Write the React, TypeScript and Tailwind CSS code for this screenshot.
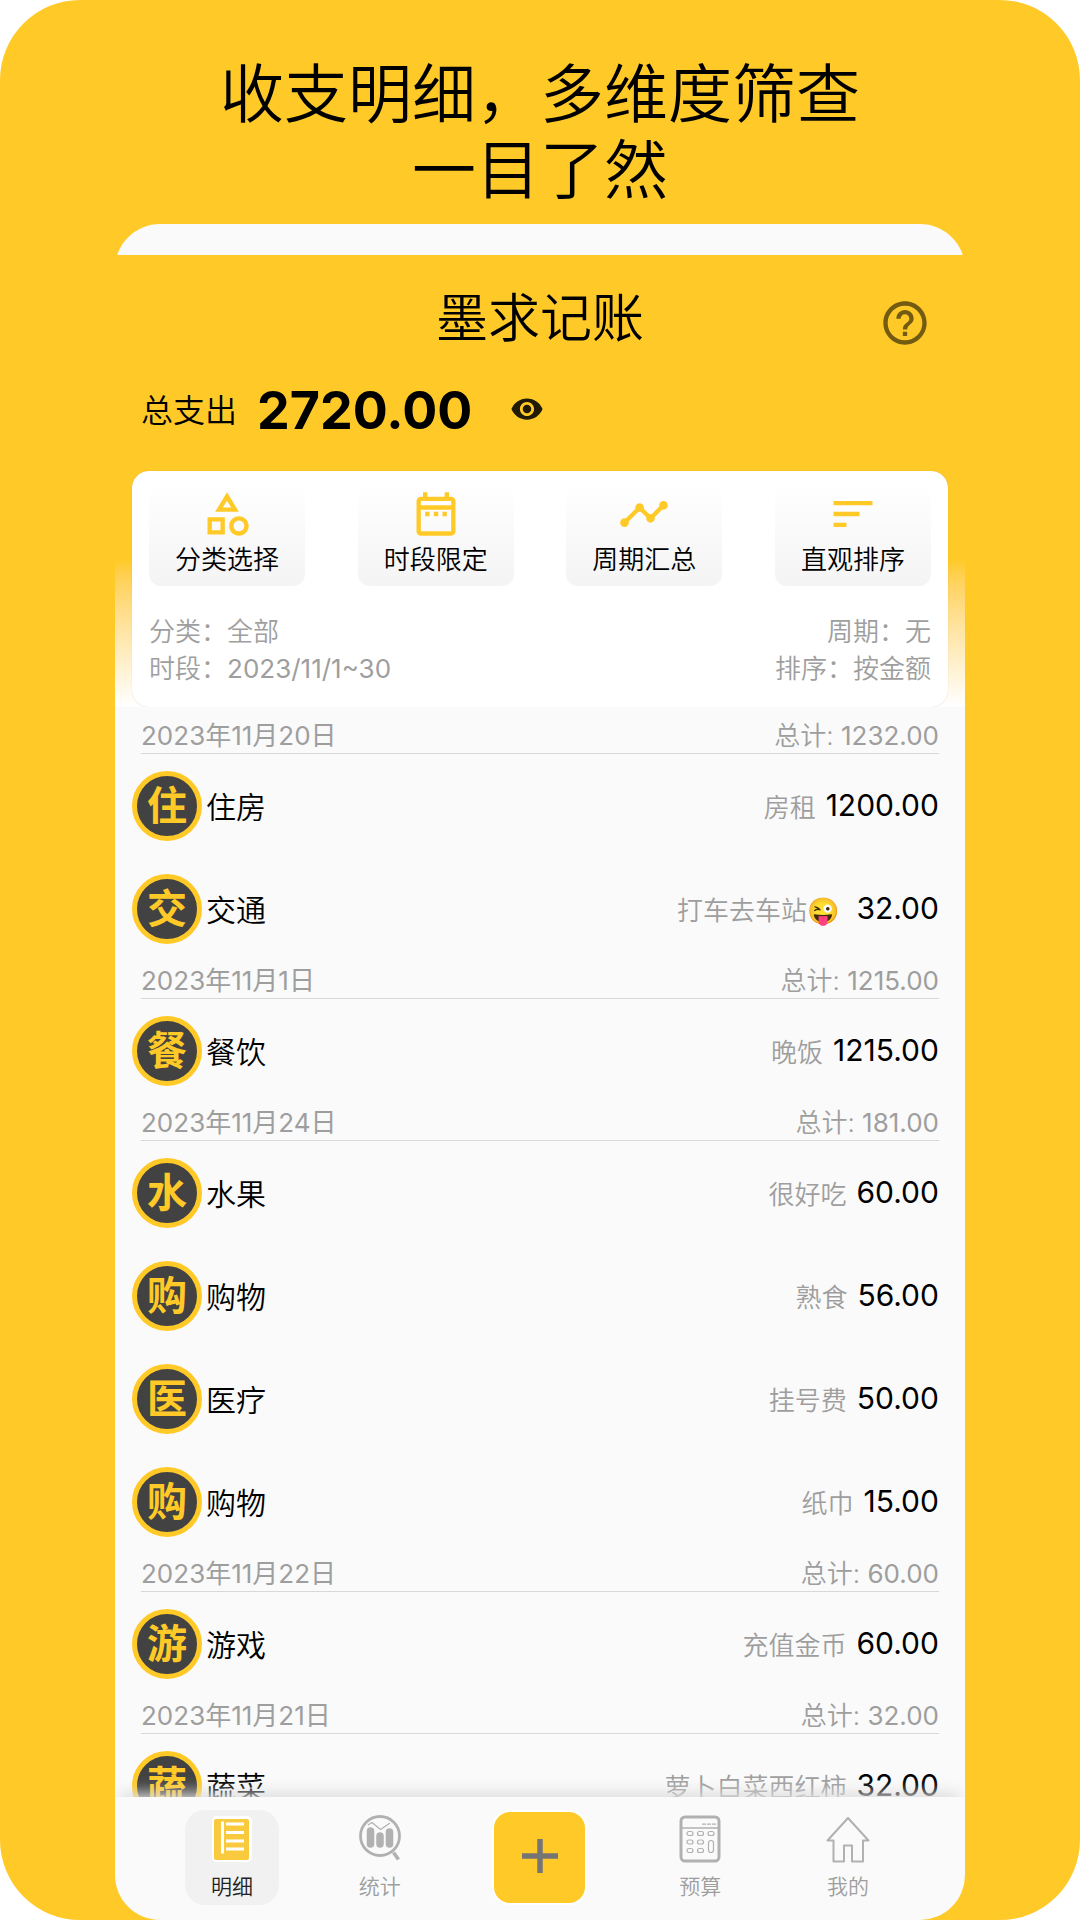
import {
  MdHelpOutline,
  MdOutlineCategory,
  MdOutlineDateRange,
  MdSort,
  MdTimeline,
  MdVisibility,
} from "react-icons/md";

const filters = [
  { label: "分类选择", Icon: MdOutlineCategory },
  { label: "时段限定", Icon: MdOutlineDateRange },
  { label: "周期汇总", Icon: MdTimeline },
  { label: "直观排序", Icon: MdSort },
];

const groups = [
  {
    date: "2023年11月20日",
    total: "1232.00",
    items: [
      { mark: "住", name: "住房", note: "房租", amount: "1200.00" },
      { mark: "交", name: "交通", note: "打车去车站😜 ", amount: "32.00" },
    ],
  },
  {
    date: "2023年11月1日",
    total: "1215.00",
    items: [{ mark: "餐", name: "餐饮", note: "晚饭", amount: "1215.00" }],
  },
  {
    date: "2023年11月24日",
    total: "181.00",
    items: [
      { mark: "水", name: "水果", note: "很好吃", amount: "60.00" },
      { mark: "购", name: "购物", note: "熟食", amount: "56.00" },
      { mark: "医", name: "医疗", note: "挂号费", amount: "50.00" },
      { mark: "购", name: "购物", note: "纸巾", amount: "15.00" },
    ],
  },
  {
    date: "2023年11月22日",
    total: "60.00",
    items: [{ mark: "游", name: "游戏", note: "充值金币", amount: "60.00" }],
  },
  {
    date: "2023年11月21日",
    total: "32.00",
    items: [{ mark: "蔬", name: "蔬菜", note: "萝卜白菜西红柿", amount: "32.00" }],
  },
];

type Item = (typeof groups)[number]["items"][number];

function ListIcon() {
  return (
    <svg viewBox="0 0 42 48" className="w-[42px] h-12" aria-hidden="true">
      <rect x="1" y="1" width="40" height="46" rx="5" fill="#fff" />
      <rect x="3" y="4" width="35" height="41" rx="2" fill="#f9ca3e" />
      <path d="M11.500 6.500v32M15 9h18M15 17.500h18M15 26h18M15 34h18" stroke="#fff" strokeWidth="3" />
    </svg>
  );
}

function StatsIcon() {
  return (
    <svg viewBox="0 0 42 48" className="w-[42px] h-12" fill="none" stroke="#b1b1b1" aria-hidden="true">
      <circle cx="21" cy="21" r="19.500" strokeWidth="2.800" />
      <path d="M11.500 16v13M21 21v8M30.500 17v12" strokeWidth="7.500" strokeLinecap="round" />
      <path d="M9 10l4-2.500 8.500 7L31 8" strokeWidth="1.200" />
      <path d="M34.500 37.500l5 7" strokeWidth="3.500" />
    </svg>
  );
}

function BudgetIcon() {
  return (
    <svg viewBox="0 0 42 48" className="w-[42px] h-12" fill="none" stroke="#b1b1b1" aria-hidden="true">
      <rect x="2" y="2" width="38" height="44" rx="4" strokeWidth="3" />
      <path d="M3 13h36" strokeWidth="1.500" />
      <path d="M23 9.200h14" strokeWidth="1.300" strokeDasharray="4 1" />
      <g strokeWidth="1.200">
        {[18.500, 27, 35.500].map((y) => (
          <g key={y}>
            <rect x="8" y={y - 2} width="6" height="4" rx="2" />
            <rect x="18.500" y={y - 2} width="6" height="4" rx="2" />
          </g>
        ))}
        <rect x="29" y="16.500" width="6" height="4" rx="2" />
        <rect x="29.500" y="25.500" width="5" height="12" rx="2.500" />
      </g>
    </svg>
  );
}

function HomeIcon() {
  return (
    <svg viewBox="0 0 44 48" className="w-11 h-12" fill="none" stroke="#b1b1b1" strokeWidth="2" strokeLinejoin="round" aria-hidden="true">
      <path d="M22 3L1.500 25.500H7.500v21H18V30.500h8v16h11v-21h5.500z" />
    </svg>
  );
}

const tabs = [
  { label: "明细", Icon: ListIcon, active: true },
  { label: "统计", Icon: StatsIcon },
  null,
  { label: "预算", Icon: BudgetIcon },
  { label: "我的", Icon: HomeIcon },
];

function Header() {
  return (
    <header>
      <div className="grid grid-cols-[1fr_auto_1fr] items-center px-[34px] pt-6">
        <h2 className="col-start-2 text-[52px] leading-[80px]">墨求记账</h2>
        <button aria-label="帮助" className="justify-self-end pt-2 text-black/55">
          <MdHelpOutline className="size-[52px]" />
        </button>
      </div>
      <div className="flex items-center px-[26px] pt-5 pb-7">
        <span className="text-[32px] leading-[64px]">总支出</span>
        <strong className="ml-5 text-[52px] leading-[64px] font-bold">2720.00</strong>
        <button aria-label="隐藏金额" className="ml-[38px] pb-1 text-black/87">
          <MdVisibility className="size-[34px]" />
        </button>
      </div>
    </header>
  );
}

function FilterCard() {
  return (
    <section className="bg-linear-to-b from-[#ffca28] from-38% to-white px-[17px]">
      <div className="rounded-[17px] bg-white px-[17px] pt-[13px] pb-5 shadow-[0_0_1px_#0003]">
        <div className="flex justify-between">
          {filters.map(({ label, Icon }) => (
            <button
              key={label}
              className="flex h-[102px] w-[156px] flex-col items-center rounded-xl bg-linear-to-b from-white to-[#f4f4f4] pt-1"
            >
              <Icon className="size-[52px] text-[#ffca28]" />
              <span className="text-[26px] leading-[40px]">{label}</span>
            </button>
          ))}
        </div>
        <div className="mt-[27px] flex justify-between text-[26px] leading-[37px] text-[#9e9e9e]">
          <div>
            <p>分类：全部</p>
            <p>
              时段：<span className="font-normal">2023/11/1~30</span>
            </p>
          </div>
          <div className="text-right">
            <p>周期：无</p>
            <p>排序：按金额</p>
          </div>
        </div>
      </div>
    </section>
  );
}

function Row({ item }: { item: Item }) {
  return (
    <li className="flex h-[103px] items-center pl-[17px] pr-[26px]">
      <span className="flex size-[70px] items-center justify-center rounded-full border-5 border-[#ffca28] bg-[#424242] text-[40px] leading-none font-bold text-[#ffca28]">
        {item.mark}
      </span>
      <span className="ml-1 pt-1 text-[30px]">{item.name}</span>
      <span className="ml-auto whitespace-pre pt-1 text-[26px] text-[#9e9e9e]">{item.note}</span>
      <span className="ml-2.5 text-[30px] font-normal">{item.amount}</span>
    </li>
  );
}

function TabBar() {
  return (
    <nav className="relative z-10 flex h-[123px] items-center justify-between bg-[#fafafa] px-[70px] pb-0.5 shadow-[0_-10px_14px_-6px_#dcdcdc]">
      {tabs.map((tab) =>
        tab ? (
          <button
            key={tab.label}
            className={`flex h-[95px] w-[94px] flex-col items-center rounded-[20px] pt-[5px] text-[21px] leading-[32px] ${
              tab.active ? "bg-[#f1f1f1] text-[#222]" : "text-[#9e9e9e]"
            }`}
          >
            <tab.Icon />
            <span className="mt-2">{tab.label}</span>
          </button>
        ) : (
          <button
            key="add"
            aria-label="记一笔"
            className="mx-3 flex size-[95px] items-center justify-center rounded-[18px] border-2 border-white bg-[#ffca28] pb-1"
          >
            <svg viewBox="0 0 36 36" className="size-9" aria-hidden="true">
              <path d="M18 1v34M0 18h36" stroke="#757575" strokeWidth="5.500" />
            </svg>
          </button>
        )
      )}
    </nav>
  );
}

export default function App() {
  return (
    <div className="bg-white font-[Inter,'Noto_Sans_CJK_SC',sans-serif] font-[350] text-black">
      <div className="flex h-screen flex-col overflow-hidden rounded-[80px] bg-[#ffca28]">
        <h1 className="pt-14 pb-4 text-center text-[64px] leading-[76px]">
          收支明细，多维度筛查
          <br />
          一目了然
        </h1>
        <main className="mx-auto flex min-h-0 w-[78.700%] flex-1 flex-col overflow-hidden rounded-[45px]">
          <div className="h-[31px] shrink-0 bg-[#fafafa]" />
          <Header />
          <FilterCard />
          <div className="min-h-0 flex-1 overflow-hidden bg-[#fafafa] pt-2">
            {groups.map((group) => (
              <section key={group.date}>
                <div className="mx-[26px] flex h-[39px] justify-between border-b border-[#d8d8d8] text-[26px] leading-[42px] text-[#9e9e9e]">
                  <h3 className="font-normal">{group.date}</h3>
                  <span>
                    总计: <span className="font-normal">{group.total}</span>
                  </span>
                </div>
                <ul>
                  {group.items.map((item, i) => (
                    <Row key={i} item={item} />
                  ))}
                </ul>
              </section>
            ))}
          </div>
          <TabBar />
        </main>
      </div>
    </div>
  );
}
